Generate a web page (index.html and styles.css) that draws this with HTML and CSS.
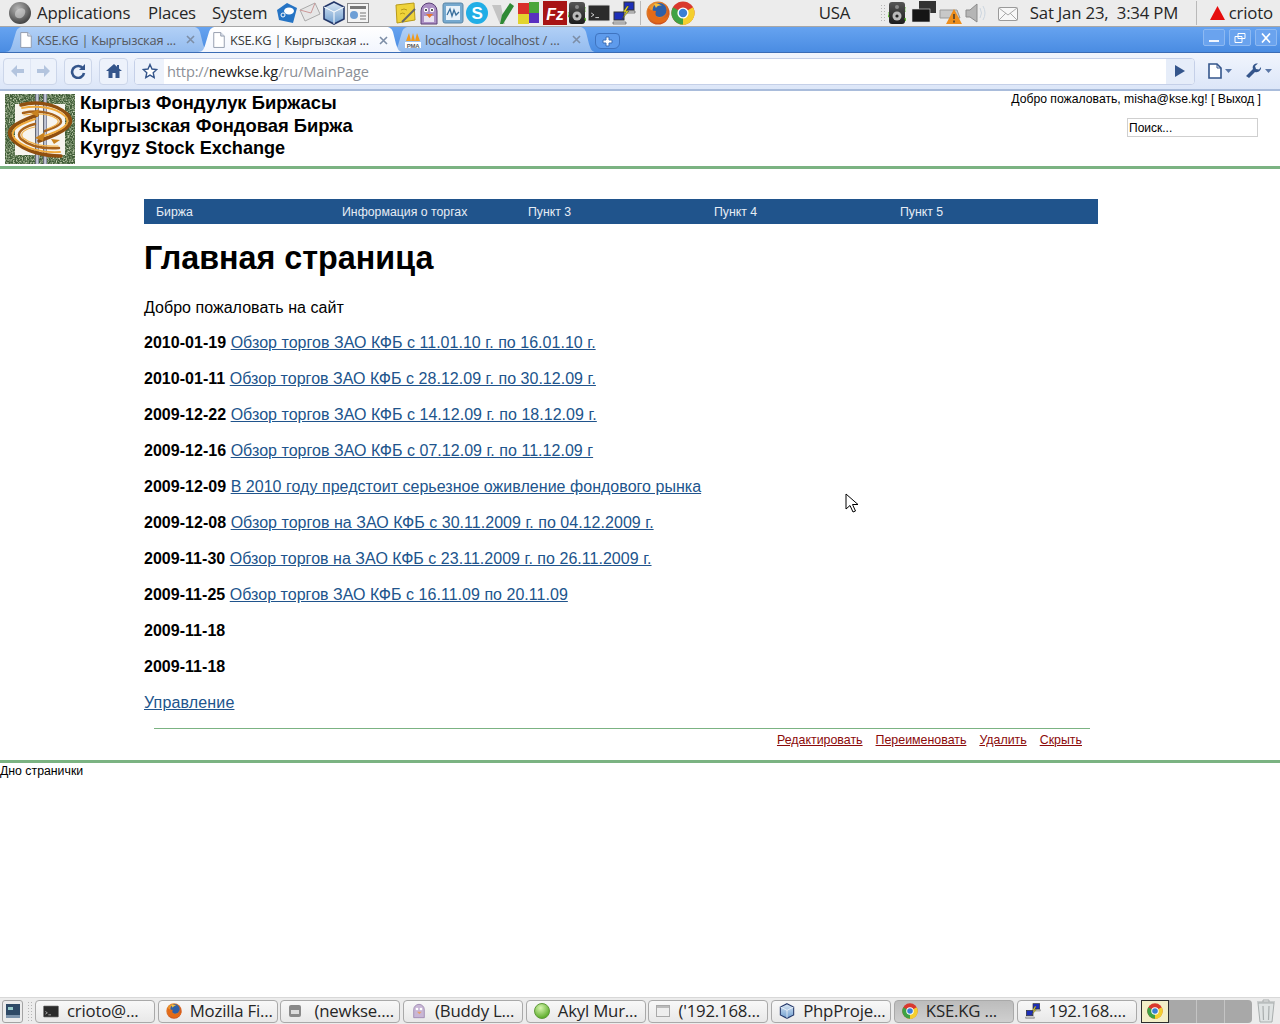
FILE: index.html
```html
<!DOCTYPE html>
<html lang="ru">
<head>
    <meta charset="utf-8">
    <title>KSE.KG | Кыргызская Фондовая Биржа</title>
    <link rel="stylesheet" href="styles.css">
</head>
<body>
<div class="screen">
    <svg width="0" height="0" class="defs">
        <defs>
            <radialGradient id="gFox" cx="40%" cy="35%" r="70%"><stop offset="0" stop-color="#f7b63a"/><stop offset="1" stop-color="#c8481a"/></radialGradient>
            <linearGradient id="gCube" x1="0" y1="0" x2="0" y2="1"><stop offset="0" stop-color="#dbe8f5"/><stop offset="1" stop-color="#6f9ecf"/></linearGradient>
            <radialGradient id="gFoot" cx="40%" cy="30%" r="75%"><stop offset="0" stop-color="#b5b5b5"/><stop offset="1" stop-color="#3c3c3c"/></radialGradient>
            <radialGradient id="gBall" cx="40%" cy="30%" r="75%"><stop offset="0" stop-color="#d8f5b0"/><stop offset="1" stop-color="#4fa51c"/></radialGradient>
            <linearGradient id="gSpeaker" x1="0" y1="0" x2="0" y2="1"><stop offset="0" stop-color="#555"/><stop offset="1" stop-color="#1c1c1c"/></linearGradient>
            <linearGradient id="gBar" x1="0" y1="0" x2="1" y2="0"><stop offset="0" stop-color="#3b3f4a"/><stop offset=".5" stop-color="#dfe4f2"/><stop offset="1" stop-color="#6d7388"/></linearGradient>
            <filter id="moss" x="0" y="0" width="100%" height="100%"><feTurbulence type="fractalNoise" baseFrequency="0.7" numOctaves="2" seed="4"/><feColorMatrix values="0 0 0 0 .62  0 0 0 0 .7  0 0 0 0 .5  2.4 0 0 0 -.95"/></filter>
            <symbol id="chrome" viewBox="0 0 24 24">
                <circle cx="12" cy="12" r="11.500" fill="#d9382e"/>
                <path d="M12 12 L22 18 A11.500 11.500 0 0 1 7 22.400Z" fill="#f4cf2e"/>
                <path d="M22 6.200 A11.500 11.500 0 0 1 12 23.500 L12 12Z" fill="#f4cf2e"/>
                <path d="M12 12 L12 23.500 A11.500 11.500 0 0 1 2 6.200Z" fill="#3fa244"/>
                <circle cx="12" cy="12" r="5.600" fill="#fff"/><circle cx="12" cy="12" r="4.200" fill="#3a7fd5"/>
            </symbol>
            <symbol id="firefox" viewBox="0 0 24 24">
                <circle cx="12" cy="12" r="11.500" fill="url(#gFox)"/>
                <circle cx="13.500" cy="9" r="7" fill="#2e5fa8"/>
                <path d="M8 3c3-1 6 0 8 2-3-1-5 0-6 2z" fill="#f4c23e"/>
                <path d="M2 7C1 15 6 22 13 22c6 0 10-4 10.500-10-2 5-7 6-10 5-3-1-5-3-3.500-7-3 0-6-1-8-3z" fill="#e46a18"/>
            </symbol>
            <symbol id="cube" viewBox="0 0 24 24">
                <path d="M12 1 22 6v12l-10 5L2 18V6z" fill="url(#gCube)" stroke="#24386a" stroke-width="1.600"/>
                <path d="M2 6l10 5 10-5M12 11v12" fill="none" stroke="#fff" stroke-width="1"/>
            </symbol>
            <symbol id="page" viewBox="0 0 16 18">
                <path d="M2 .5h8l4 4v13H2z" fill="#fff" stroke="#8a94a6"/><path d="M10 .5v4h4" fill="#dde3ee" stroke="#8a94a6"/>
            </symbol>
            <symbol id="term" viewBox="0 0 24 18">
                <rect x=".5" y=".5" width="23" height="17" rx="1.500" fill="#2b2b2b" stroke="#999"/>
                <path d="M3.500 9l3 2-3 2M8 14h4" fill="none" stroke="#ddd"/>
            </symbol>
            <symbol id="net" viewBox="0 0 24 24">
                <rect x="12" y="1" width="10" height="8" fill="#1d2fb8" stroke="#333"/>
                <rect x="2" y="11" width="10" height="8" fill="#1d2fb8" stroke="#333"/>
                <path d="M1 21h13v2H1zM14 10h9v2h-9z" fill="#ddd" stroke="#444" stroke-width=".6"/>
                <path d="M15 5l-4 6h3l-4 7 7-8h-3l3-5z" fill="#f2e21c" stroke="#333" stroke-width=".5"/>
            </symbol>
            <symbol id="speaker" viewBox="0 0 18 24">
                <rect x="1" y="1" width="16" height="22" rx="3" fill="url(#gSpeaker)"/>
                <circle cx="9" cy="15" r="4.500" fill="#bbb"/><circle cx="9" cy="15" r="1.600" fill="#222"/>
                <circle cx="9" cy="6" r="2" fill="#888"/>
                <path d="M0 11q-1 3 1 5M18 6q1 3 0 5M17 17l1 3" fill="none" stroke="#58b82c" stroke-width="1.500"/>
            </symbol>
            <symbol id="close" viewBox="0 0 9 9">
                <path d="M1 1l7 7M8 1L1 8" stroke="#7d8ea6" stroke-width="1.600"/>
            </symbol>
        </defs>
    </svg>

    <header class="panel">
        <svg class="ico foot" width="22" height="22" viewBox="0 0 22 22"><circle cx="11" cy="11" r="11" fill="url(#gFoot)"/><path d="M7 9c2-3 7-4 9-1 1 3-1 7-4 8-3 1-6-1-6-3 0-2 0-3 1-4z" fill="#ddd" opacity=".55"/></svg>
        <span class="menu m-app">Applications</span>
        <span class="menu m-places">Places</span>
        <span class="menu m-system">System</span>

        <div class="launchers l-one">
            <svg width="22" height="22" viewBox="0 0 22 22"><path d="M11 1 21 6 17 21 3 18 1 8z" fill="#2674c4"/><ellipse cx="13" cy="9" rx="5" ry="3.500" fill="#fff"/><circle cx="7" cy="13" r="2" fill="none" stroke="#fff"/></svg>
            <svg width="22" height="22" viewBox="0 0 22 22"><path d="M1 8 16 1l5 11-15 7z" fill="#e6e6e6" stroke="#aaa"/><path d="M1 8l11 3 4-10" fill="none" stroke="#c99"/></svg>
            <svg width="24" height="24" viewBox="0 0 24 24"><use href="#cube"/></svg>
            <svg width="22" height="20" viewBox="0 0 22 20"><rect x=".5" y=".5" width="21" height="19" fill="#f4f4f4" stroke="#8b8b8b"/><rect x="3" y="3" width="16" height="3" fill="#777"/><circle cx="7" cy="12" r="4" fill="#6d9fd6"/><path d="M13 10h6M13 13h6M13 16h6" stroke="#777"/></svg>
        </div>

        <div class="launchers l-two">
            <svg width="22" height="22" viewBox="0 0 22 22"><path d="M2 3 20 1l1 17-18 3z" fill="#efd33a" stroke="#b89a18"/><path d="M7 8q3-2 6 0M6 12q3-2 5 0" fill="none" stroke="#b89a18"/><path d="M8 20 21 7" stroke="#666" stroke-width="2"/></svg>
            <svg width="22" height="24" viewBox="0 0 22 24"><path d="M3 23V10a8 8 0 0 1 16 0v13z" fill="#ab90c4" stroke="#5c4178"/><path d="M6 21v-6h10v6z" fill="#e8e2f0"/><circle cx="8" cy="9" r="2.200" fill="#fff"/><circle cx="14" cy="9" r="2.200" fill="#fff"/><circle cx="8" cy="9" r="1" fill="#222"/><circle cx="14" cy="9" r="1" fill="#222"/><path d="M8 13h7l-3.500 4z" fill="#e8762c"/></svg>
            <svg width="22" height="22" viewBox="0 0 22 22"><rect x="1" y="1" width="20" height="20" rx="2" fill="#76a9cf" stroke="#5b87a8"/><rect x="4" y="4" width="14" height="14" fill="#e8f2fa"/><path d="M5 13l3-6 2 7 2-6 2 5 3-3" fill="none" stroke="#386f9c" stroke-width="1.300"/></svg>
            <svg width="24" height="24" viewBox="0 0 24 24"><circle cx="12" cy="12" r="11" fill="#21aee6"/><text x="12" y="18" class="skype">S</text></svg>
            <svg width="24" height="24" viewBox="0 0 24 24"><path d="M1 4l9 0 2 11 2 8H9z" fill="#c4c4c4"/><path d="M9 23l2-9 8-12 4 3-11 18z" fill="#2f8a35"/></svg>
            <svg width="24" height="24" viewBox="0 0 24 24"><path d="M1 2h11v11H1z" fill="#d9302a"/><path d="M12 1h10v11H12z" fill="#4aa53a"/><path d="M1 13h11v10H1z" fill="#e2d42e"/><path d="M12 12h10v10H12z" fill="#5a2fc0"/></svg>
            <svg width="24" height="24" viewBox="0 0 24 24"><rect width="24" height="24" fill="#a81414"/><text x="12" y="19" class="fz">Fz</text></svg>
            <svg width="18" height="24" viewBox="0 0 18 24"><use href="#speaker"/></svg>
            <svg width="22" height="18" viewBox="0 0 24 18"><use href="#term"/></svg>
            <svg width="24" height="24" viewBox="0 0 24 24"><use href="#net"/></svg>
        </div>
        <span class="panel-sep sep-one"></span>
        <svg class="ico ff" width="24" height="24"><use href="#firefox"/></svg>
        <svg class="ico gc" width="24" height="24"><use href="#chrome"/></svg>

        <span class="menu m-usa">USA</span>
        <span class="dots"></span>
        <svg class="ico t-speaker" width="18" height="24"><use href="#speaker"/></svg>
        <svg class="ico t-mon" width="26" height="24" viewBox="0 0 26 24"><rect x="8" y="0" width="17" height="12" fill="#333"/><rect x="1" y="8" width="18" height="13" fill="#151515" stroke="#ddd" stroke-width=".6"/></svg>
        <svg class="ico t-drive" width="24" height="24" viewBox="0 0 24 24"><path d="M1 9h17l3 8H1z" fill="#c8c8c8" stroke="#999"/><path d="M15 8l8 15H7z" fill="#ee8e1c"/><path d="M15 13v5M15 19.500v2" stroke="#333" stroke-width="1.400"/></svg>
        <svg class="ico t-vol" width="22" height="22" viewBox="0 0 22 22"><path d="M1 8h4l7-6v18l-7-5H1z" fill="#b5b5b5" stroke="#8b8b8b"/><path d="M15 6q3 5 0 10M18 4q4 7 0 14" fill="none" stroke="#ccd6e0"/></svg>
        <svg class="ico t-mail" width="20" height="16" viewBox="0 0 20 16"><rect x=".5" y="2.500" width="19" height="13" rx="1" fill="#f8f8f8" stroke="#9a9a9a"/><path d="M1 3l9 7 9-7M1 15l7-7M19 15l-7-7" fill="none" stroke="#aaa"/></svg>
        <span class="menu m-clock">Sat Jan 23, &nbsp;3:34 PM</span>
        <span class="panel-sep sep-two"></span>
        <svg class="ico t-tri" width="15" height="14" viewBox="0 0 15 14"><path d="M7.500 0 15 14H0z" fill="#e60d0d"/></svg>
        <span class="menu m-user">crioto</span>
    </header>

    <div class="tabbar">
        <div class="tab">
            <svg class="fav" width="14" height="16"><use href="#page"/></svg>
            <span class="tab-title">KSE.KG | Кыргызская ...</span>
            <svg class="tab-x" width="9" height="9"><use href="#close"/></svg>
        </div>
        <div class="tab active">
            <svg class="fav" width="14" height="16"><use href="#page"/></svg>
            <span class="tab-title">KSE.KG | Кыргызская ...</span>
            <svg class="tab-x" width="9" height="9"><use href="#close"/></svg>
        </div>
        <div class="tab">
            <svg class="fav" width="16" height="16" viewBox="0 0 16 16"><path d="M1 9l3-8 2 8 2-8 2 8 2-8 3 8z" fill="#f09a1c"/><rect y="10" width="16" height="6" fill="#fff"/><text x="8" y="15.500" class="pma">PMA</text></svg>
            <span class="tab-title">localhost / localhost / ...</span>
            <svg class="tab-x" width="9" height="9"><use href="#close"/></svg>
        </div>
        <div class="newtab">
            <svg width="11" height="11" viewBox="0 0 11 11"><path d="M4 1h3v3h3v3H7v3H4V7H1V4h3z" fill="#fff" stroke="#3b6fb8"/></svg>
        </div>
        <div class="winbtns">
            <span class="winbtn"><svg width="12" height="10" viewBox="0 0 12 10"><path d="M1 7h10v2H1z" fill="#fff" opacity=".9"/></svg></span>
            <span class="winbtn"><svg width="12" height="10" viewBox="0 0 12 10"><path d="M4 .5h7v5H4zM1 3.500h7v6H1z" fill="none" stroke="#fff"/></svg></span>
            <span class="winbtn"><svg width="12" height="10" viewBox="0 0 12 10"><path d="M2 .5l8 9M10 .5l-8 9" stroke="#fff" stroke-width="1.700"/></svg></span>
        </div>
    </div>

    <div class="toolbar">
        <div class="tbtn nav-pair">
            <svg width="16" height="14" viewBox="0 0 16 14"><path d="M8 1 2 7l6 6V9h7V5H8z" fill="#b3c4de"/></svg>
            <span class="nav-div"></span>
            <svg width="16" height="14" viewBox="0 0 16 14"><path d="M8 1l6 6-6 6V9H1V5h7z" fill="#b3c4de"/></svg>
        </div>
        <div class="tbtn reload">
            <svg width="16" height="16" viewBox="0 0 16 16"><path d="M13 5.500A6 6 0 1 0 14 10" fill="none" stroke="#34558b" stroke-width="2.600"/><path d="M15 1v6H9z" fill="#34558b"/></svg>
        </div>
        <div class="tbtn home">
            <svg width="16" height="16" viewBox="0 0 16 16"><path d="M8 1 0 8h2.500v7h4v-5h3v5h4V8H16l-3-2.600V2h-2v1.700z" fill="#34558b"/></svg>
        </div>
        <div class="omnibox">
            <span class="star">
                <svg width="16" height="16" viewBox="0 0 16 16"><path d="M8 1.500l2 4.500 4.800.5-3.600 3.200 1 4.800L8 12.100l-4.200 2.400 1-4.800L1.200 6.500 6 6z" fill="#fff" stroke="#34558b" stroke-width="1.400"/></svg>
            </span>
            <span class="url">http://<b>newkse.kg</b>/ru/MainPage</span>
            <span class="go"><svg width="10" height="12" viewBox="0 0 10 12"><path d="M0 0l10 6-10 6z" fill="#34558b"/></svg></span>
        </div>
        <svg class="tool t-page" width="26" height="16" viewBox="0 0 26 16"><path d="M2 1h8l4 4v10H2z" fill="#fff" stroke="#34558b" stroke-width="1.600"/><path d="M10 1v4h4" fill="none" stroke="#34558b"/><path d="M18 6h7l-3.500 4z" fill="#5a77a6"/></svg>
        <svg class="tool t-wrench" width="27" height="16" viewBox="0 0 27 16"><path d="M1 13 8 6c-1-3 1-6 5-5.500L10 3l1 3 3 .5L16 4c.5 3-2.500 6-6 5l-6 6z" fill="#34558b"/><path d="M20 6h7l-3.500 4z" fill="#5a77a6"/></svg>
    </div>

    <div class="page">
        <div class="site-head">
            <svg class="logo" width="70" height="70" viewBox="0 0 70 70">
                <rect width="70" height="70" fill="#3f5c36"/>
                <rect width="70" height="70" filter="url(#moss)"/>
                <rect x="10" y="10" width="50" height="51" fill="#f6f4ee"/>
                <rect x="30" width="4" height="70" fill="url(#gBar)"/>
                <rect x="38" width="4" height="70" fill="url(#gBar)"/>
                <g fill="none" stroke-linecap="round">
                    <path d="M16 11C30 7 50 9 62 20 72 30 60 38 34 47" stroke="#8f4f10" stroke-width="3.500"/>
                    <path d="M17 14C32 11 50 13 60 22 68 30 56 37 36 43" stroke="#f0aa3c" stroke-width="2"/>
                    <path d="M18 19C32 16 46 18 54 24 60 29 52 33 40 37" stroke="#a8621a" stroke-width="2.500"/>
                    <path d="M19 21C32 19 45 20 52 25 56 29 50 32 42 35" stroke="#f2b24a" stroke-width="1.200"/>
                    <path d="M56 62C40 62 20 58 8 46 -1 36 8 30 32 21" stroke="#8f4f10" stroke-width="3.500"/>
                    <path d="M55 58C38 59 20 55 10 45 3 37 12 31 30 25" stroke="#f0aa3c" stroke-width="2"/>
                    <path d="M54 54C38 55 24 52 16 45 10 39 18 33 30 30" stroke="#a8621a" stroke-width="2.500"/>
                    <path d="M53 52C38 53 26 50 18 44 14 39 20 35 30 33" stroke="#f2b24a" stroke-width="1.200"/>
                </g>
                <path d="M30 44l10-6-2 9zM26 19l8-4-1 8zM46 45l9 1-6 4z" fill="#c9821e"/>
            </svg>
            <div class="site-name">
                <div>Кыргыз Фондулук Биржасы</div>
                <div>Кыргызская Фондовая Биржа</div>
                <div class="latin">Kyrgyz Stock Exchange</div>
            </div>
            <div class="user-box">
                <div class="welcome">Добро пожаловать, misha@kse.kg! [ Выход ]</div>
                <input class="search" type="text" value="Поиск...">
            </div>
        </div>

        <div class="content">
            <nav class="mainnav">
                <a>Биржа</a>
                <a>Информация о торгах</a>
                <a>Пункт 3</a>
                <a>Пункт 4</a>
                <a>Пункт 5</a>
            </nav>
            <h1>Главная страница</h1>
            <p class="intro">Добро пожаловать на сайт</p>
            <p><b>2010-01-19</b> <a href="#">Обзор торгов ЗАО КФБ с 11.01.10 г. по 16.01.10 г.</a></p>
            <p><b>2010-01-11</b> <a href="#">Обзор торгов ЗАО КФБ с 28.12.09 г. по 30.12.09 г.</a></p>
            <p><b>2009-12-22</b> <a href="#">Обзор торгов ЗАО КФБ с 14.12.09 г. по 18.12.09 г.</a></p>
            <p><b>2009-12-16</b> <a href="#">Обзор торгов ЗАО КФБ с 07.12.09 г. по 11.12.09 г</a></p>
            <p><b>2009-12-09</b> <a href="#">В 2010 году предстоит серьезное оживление фондового рынка</a></p>
            <p><b>2009-12-08</b> <a href="#">Обзор торгов на ЗАО КФБ с 30.11.2009 г. по 04.12.2009 г.</a></p>
            <p><b>2009-11-30</b> <a href="#">Обзор торгов на ЗАО КФБ с 23.11.2009 г. по 26.11.2009 г.</a></p>
            <p><b>2009-11-25</b> <a href="#">Обзор торгов ЗАО КФБ с 16.11.09 по 20.11.09</a></p>
            <p><b>2009-11-18</b></p>
            <p><b>2009-11-18</b></p>
            <p class="manage"><a href="#">Управление</a></p>
            <div class="page-actions">
                <a href="#">Редактировать</a>
                <a href="#">Переименовать</a>
                <a href="#">Удалить</a>
                <a href="#">Скрыть</a>
            </div>
        </div>

        <footer class="site-foot">Дно странички</footer>

        <svg class="cursor" width="14" height="20" viewBox="0 0 14 20"><path d="M1 1v15l4-3.500 3 6.500 2.500-1-3-6.500H13z" fill="#fff" stroke="#000"/></svg>
    </div>

    <div class="taskbar">
        <span class="show-desktop"><svg width="14" height="14" viewBox="0 0 14 14"><rect width="14" height="14" fill="#2f4a66"/><rect x="2" y="3" width="5" height="3" fill="#9cc"/><rect y="11" width="14" height="3" fill="#7c93ab"/></svg></span>
        <span class="dots low"></span>
        <div class="task"><svg width="16" height="13" viewBox="0 0 24 18"><use href="#term"/></svg><span>crioto@...</span></div>
        <div class="task"><svg width="16" height="16"><use href="#firefox"/></svg><span>Mozilla Fi...</span></div>
        <div class="task"><svg width="14" height="14" viewBox="0 0 14 14"><rect x="1" y="1" width="12" height="12" rx="2" fill="#8a8a8a"/><rect x="3" y="6" width="8" height="4" fill="#ddd"/></svg><span>&nbsp;(newkse....</span></div>
        <div class="task"><svg width="16" height="16" viewBox="0 0 22 24"><path d="M3 22V10a8 8 0 0 1 16 0v12z" fill="#c8b6d6" stroke="#8d76a3"/><circle cx="8" cy="9" r="2" fill="#fff"/><circle cx="14" cy="9" r="2" fill="#fff"/><path d="M8 13h7l-3.500 4z" fill="#e8a06c"/></svg><span>(Buddy L...</span></div>
        <div class="task"><svg width="16" height="16" viewBox="0 0 16 16"><circle cx="8" cy="8" r="7.500" fill="url(#gBall)" stroke="#5f9a3a"/></svg><span>Akyl Mur...</span></div>
        <div class="task"><svg width="14" height="14" viewBox="0 0 14 14"><rect x=".5" y="1.500" width="13" height="11" fill="#eee" stroke="#a9a9a9"/><rect x="1" y="2" width="12" height="2" fill="#bbb"/></svg><span>('192.168...</span></div>
        <div class="task"><svg width="16" height="16"><use href="#cube"/></svg><span>PhpProje...</span></div>
        <div class="task current"><svg width="16" height="16"><use href="#chrome"/></svg><span>KSE.KG ...</span></div>
        <div class="task"><svg width="16" height="16"><use href="#net"/></svg><span>192.168....</span></div>
        <div class="pager">
            <span class="desk on"><svg width="16" height="16"><use href="#chrome"/></svg></span>
            <span class="desk"></span><span class="desk"></span><span class="desk"></span>
        </div>
        <svg class="trash" width="18" height="24" viewBox="0 0 18 24"><path d="M1 4h16l-2 19H3z" fill="#dfe3e3" stroke="#a8adad"/><path d="M0 3h18M6 7l.5 14M12 7l-.5 14" stroke="#a8adad" stroke-width="1.200"/><path d="M6 3V1h6v2" fill="none" stroke="#a8adad"/></svg>
    </div>
</div>
</body>
</html>
```

FILE: styles.css
```css
* {
    box-sizing: border-box;
}
html, body {
    margin: 0;
    padding: 0;
    background-color: #ffffff;
}
.screen {
    width: 1280px;
    height: 1024px;
    display: flex;
    flex-direction: column;
    overflow: hidden;
    font-family: "Open Sans", sans-serif;
}
.defs {
    position: absolute;
}
svg {
    display: block;
    flex: none;
}

/* gnome panel */
.panel {
    height: 27px;
    flex: none;
    display: flex;
    align-items: center;
    background-color: #ececec;
    border-bottom: 1px solid #a7a7a7;
    color: #262626;
    font-size: 16.8px;
    letter-spacing: -0.2px;
    white-space: nowrap;
}
.menu {
    margin-top: -2px;
}
.foot { margin-left: 9px; }
.m-app { margin-left: 6px; width: 111px; }
.m-places { width: 64px; }
.m-system { width: 64px; }
.launchers {
    display: flex;
    align-items: center;
}
.l-one { gap: 1px; }
.l-two { margin-left: 25px; gap: 1.75px; }
.skype {
    fill: #ffffff;
    font: bold 17px "Liberation Sans", sans-serif;
    text-anchor: middle;
}
.fz {
    fill: #ffffff;
    font: italic bold 16px "Liberation Sans", sans-serif;
    text-anchor: middle;
}
.pma {
    fill: #5a5a5a;
    font: bold 6px "Liberation Sans", sans-serif;
    text-anchor: middle;
}
.panel-sep {
    width: 1px;
    height: 24px;
    background-color: #b9b9b9;
}
.sep-one { margin-left: 4px; }
.ff { margin-left: 5px; }
.gc { margin-left: 1px; }
.m-usa { margin-left: 124px; width: 61px; }
.dots {
    width: 5px;
    height: 18px;
    background-image: radial-gradient(#b5b5b5 1px, transparent 1px);
    background-size: 3px 3px;
}
.t-speaker { margin-left: 3px; }
.t-mon { margin-left: 5px; }
.t-drive { margin-left: 2px; }
.t-vol { margin-left: 2px; }
.t-mail { margin-left: 11px; }
.m-clock { margin-left: 12px; width: 166px; }
.t-tri { margin-left: 13px; }
.m-user { margin-left: 4px; }

/* browser tabs */
.tabbar {
    height: 26px;
    flex: none;
    display: flex;
    align-items: flex-end;
    padding-left: 5px;
    background: linear-gradient(#66a3f0, #4a8ce2);
    border-bottom: 1px solid #3a6cb5;
}
.tab {
    width: 205px;
    height: 25px;
    flex: none;
    margin-right: -12px;
    display: flex;
    align-items: center;
    padding: 0 15px 0 14px;
    font-size: 12.8px;
    color: #55585e;
    background: linear-gradient(#b2d0f6, #94bcef);
    clip-path: path("M0 25 C5 25 6 22 8 15 L11 5 C12 2 14 0 18 0 L188 0 C192 0 194 2 195 5 L198 17 C200 23 201 25 205 25 Z");
    letter-spacing: -0.2px;
}
.tab.active {
    height: 26px;
    margin-bottom: -1px;
    background: linear-gradient(#ffffff, #f1f5fd);
    color: #3a3a3a;
    z-index: 1;
}
.fav {
    margin-right: 4px;
}
.tab-title {
    flex: 1;
    white-space: nowrap;
    overflow: hidden;
}
.newtab {
    width: 25px;
    height: 16px;
    margin: 0 0 3px 11px;
    flex: none;
    display: flex;
    align-items: center;
    justify-content: center;
    background-color: #5e9bec;
    border: 1px solid #3f74c0;
    border-radius: 4px 4px 6px 6px;
}
.winbtns {
    display: flex;
    gap: 4px;
    margin-left: auto;
    margin-right: 3px;
    align-self: flex-start;
    margin-top: 2px;
}
.winbtn {
    width: 22px;
    height: 17px;
    display: flex;
    align-items: center;
    justify-content: center;
    background-color: #6aa3ee;
    border: 1px solid #8db9f2;
    border-radius: 2px;
}

/* browser toolbar */
.toolbar {
    height: 38px;
    flex: none;
    display: flex;
    align-items: center;
    padding: 0 8px 0 3px;
    background: linear-gradient(#f1f5fd, #dce6f8);
    border-bottom: 2px solid #a9bcdb;
}
.tbtn {
    height: 27px;
    display: flex;
    align-items: center;
    justify-content: center;
    background-color: #edf2fb;
    border: 1px solid #ccd6ea;
    border-radius: 4px;
}
.nav-pair { width: 54px; gap: 5px; }
.nav-div {
    width: 1px;
    height: 100%;
    background-color: #dfe6f4;
}
.reload { width: 28px; margin-left: 7px; }
.home { width: 29px; margin-left: 7px; }
.omnibox {
    width: 1061px;
    height: 27px;
    margin-left: 6px;
    display: flex;
    align-items: center;
    background-color: #ffffff;
    border: 1px solid #c5d0e8;
    border-radius: 4px;
    overflow: hidden;
}
.star {
    width: 29px;
    height: 100%;
    flex: none;
    display: flex;
    align-items: center;
    justify-content: center;
    background-color: #edf2fb;
}
.url {
    flex: 1;
    padding-left: 3px;
    font-size: 14.6px;
    letter-spacing: -0.15px;
    color: #8b8f96;
}
.url b {
    font-weight: 400;
    color: #1c1c1c;
}
.go {
    width: 28px;
    height: 100%;
    display: flex;
    align-items: center;
    justify-content: center;
    background-color: #e6edf9;
}
.t-page { margin-left: 12px; }
.t-wrench { margin-left: 12px; }

/* site */
.page {
    flex: 1;
    position: relative;
    font-family: "Liberation Sans", Arial, sans-serif;
    color: #000000;
}
.site-head {
    height: 78px;
    display: flex;
    padding: 3px 0 0 5px;
    border-bottom: 3px solid #7bb382;
}
.site-name {
    margin: -3px 0 0 5px;
    font-size: 18.4px;
    font-weight: bold;
    line-height: 23px;
}
.latin {
    font-size: 18.1px;
}
.user-box {
    margin-left: auto;
    padding-right: 20px;
    display: flex;
    flex-direction: column;
    align-items: flex-end;
    font-size: 12.2px;
}
.welcome {
    line-height: 11px;
    margin-right: -1px;
}
.search {
    width: 131px;
    height: 19px;
    margin: 13px 2px 0 0;
    padding: 0 1px;
    border: 1px solid #cfcfcf;
    font: 12px "Liberation Sans", Arial, sans-serif;
    color: #000000;
}
.content {
    width: 954px;
    margin-left: 144px;
    padding-top: 30px;
    font-size: 16px;
    line-height: 18px;
}
.mainnav {
    height: 25px;
    display: flex;
    align-items: center;
    padding-left: 12px;
    background-color: #20548c;
}
.content .mainnav a {
    width: 186px;
    flex: none;
    color: #e6edf5;
    font-size: 12.3px;
}
h1 {
    margin: 16px 0 0 0;
    font-size: 32.3px;
    line-height: 37px;
}
p {
    margin: 18px 0 0 0;
    letter-spacing: 0.03px;
}
.intro {
    margin-top: 22px;
    margin-bottom: -1px;
}
.manage {
    letter-spacing: 0.15px;
}
.content a {
    color: #20548c;
}
.page-actions {
    margin: 16px 8px 0 10px;
    height: 32px;
    padding: 5px 8px 0 0;
    display: flex;
    justify-content: flex-end;
    gap: 13px;
    border-top: 1px solid #7bb382;
    font-size: 12.4px;
    line-height: 13px;
}
.content .page-actions a {
    color: #8b0a0a;
}
.site-foot {
    border-top: 3px solid #7bb382;
    padding-top: 2px;
    font-size: 12.3px;
    line-height: 12px;
}
.cursor {
    position: absolute;
    left: 845px;
    top: 402px;
}

/* bottom panel */
.taskbar {
    height: 27px;
    flex: none;
    display: flex;
    align-items: center;
    padding-left: 2px;
    background-color: #ececec;
    border-top: 1px solid #d8d8d8;
    font-size: 16.8px;
    letter-spacing: -0.2px;
    color: #262626;
    white-space: nowrap;
}
.show-desktop {
    width: 21px;
    height: 23px;
    display: flex;
    align-items: center;
    justify-content: center;
    border: 1px solid #a3a3a3;
    border-radius: 3px;
}
.dots.low {
    margin: 0 3px 0 4px;
    height: 20px;
}
.task {
    width: 120px;
    height: 23px;
    flex: none;
    margin-right: 2.7px;
    display: flex;
    align-items: center;
    gap: 8px;
    padding-left: 7px;
    background: linear-gradient(#f8f8f8, #e8e8e8);
    border: 1px solid #a9a9a9;
    border-radius: 4px;
    overflow: hidden;
}
.task span {
    margin-top: -2px;
}
.task.current {
    background: linear-gradient(#bcbcbc, #cfcfcf);
}
.pager {
    width: 111px;
    height: 23px;
    margin-left: 2px;
    display: flex;
    background-color: #a8a8a8;
    border-radius: 0 4px 4px 0;
}
.desk {
    flex: 1;
    border-right: 1px solid #c4c4c4;
}
.desk:last-child {
    border-right: 0;
}
.desk.on {
    width: 28px;
    flex: none;
    display: flex;
    align-items: center;
    justify-content: center;
    background-color: #f3efc8;
    border: 1px solid #2d2d2d;
}
.trash {
    margin-left: 5px;
}
```
